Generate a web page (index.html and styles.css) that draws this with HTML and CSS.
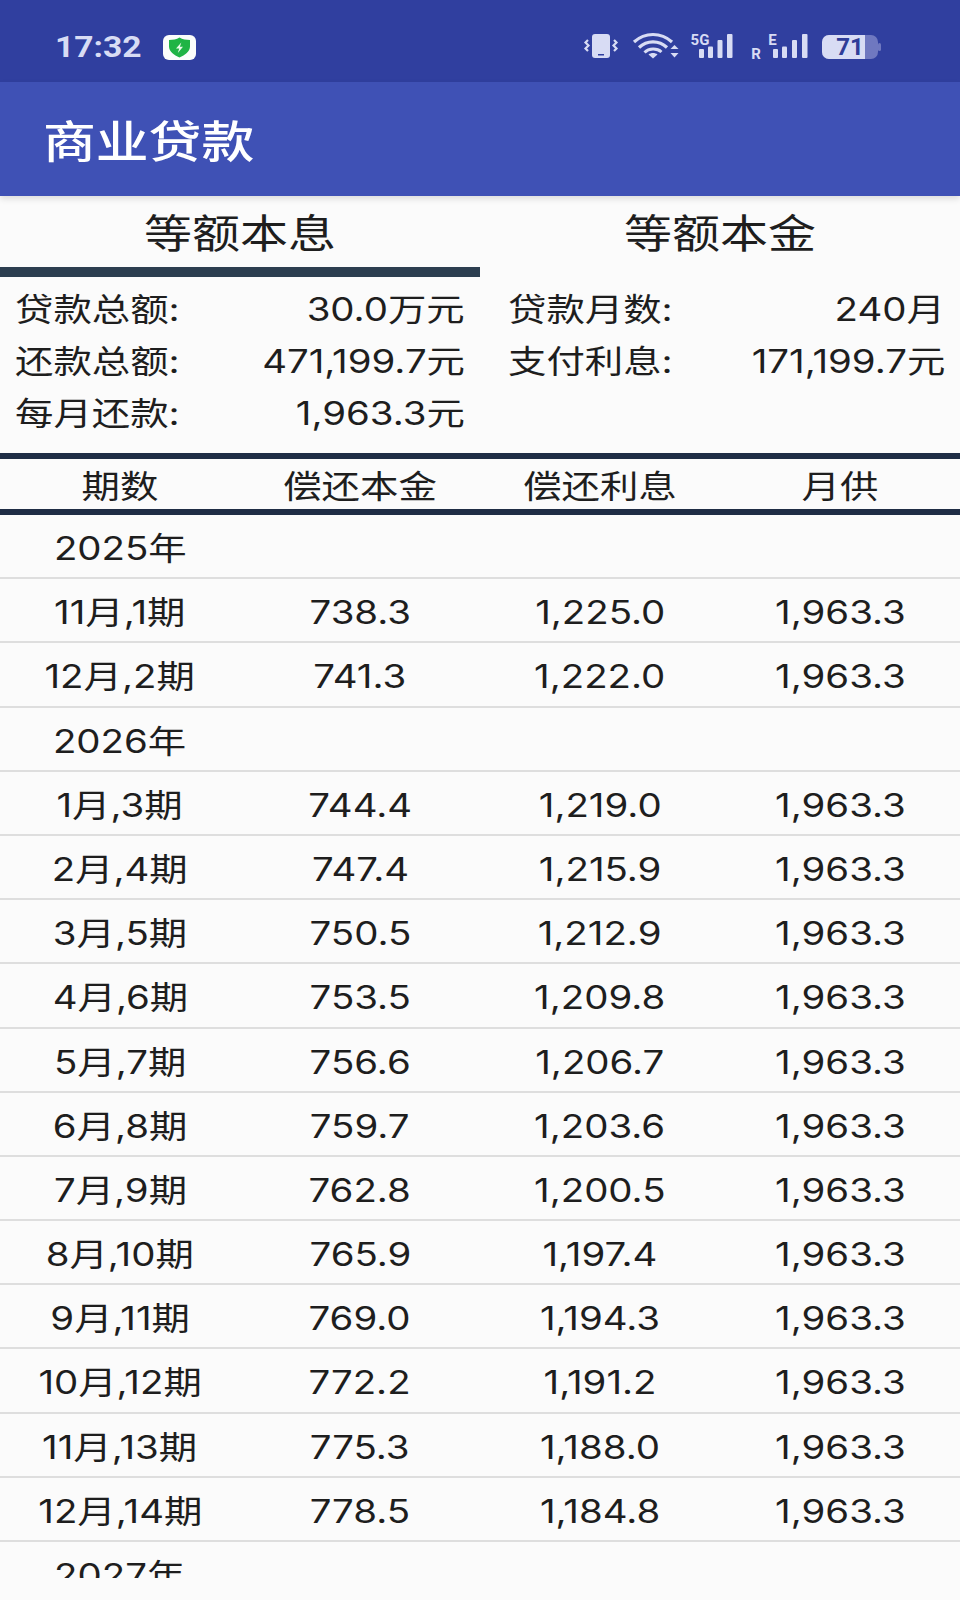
FILE: index.html
```html
<!DOCTYPE html>
<html lang="zh-CN">
<head>
    <meta charset="UTF-8">
    <meta name="viewport" content="width=device-width, initial-scale=1.0">
    <title>商业贷款</title>
    <link rel="stylesheet" href="styles.css">
</head>
<body>
    <div class="status-bar">
        <span class="time">17:32</span>
        <svg class="shield" width="33" height="25" viewBox="0 0 33 25">
            <rect width="33" height="25" rx="6" fill="#fbfdfb"/>
            <path d="M16.500 2.500 C19.500 4.300 23 5 27 5 L27 11.500 C27 16.500 22 20 16.500 22.500 C11 20 6 16.500 6 11.500 L6 5 C10 5 13.500 4.300 16.500 2.500 Z" fill="#1fb445"/>
            <path d="M18.300 7.500 L13 13.500 L16.200 13.500 L14.800 18 L20 11.800 L16.900 11.800 Z" fill="#e9fbe9"/>
        </svg>
        <svg class="status-icons" width="298" height="26" viewBox="0 0 298 26">
            <!-- vibrate -->
            <rect x="8" y="0" width="18" height="24" rx="3" fill="#d8dcf4"/>
            <rect x="14" y="20" width="6" height="1.500" fill="#303f9f"/>
            <path d="M4 6 L1.500 8.500 L4.500 11.500 L1.500 14.500 L4 17" fill="none" stroke="#d8dcf4" stroke-width="2.200"/>
            <path d="M30 6 L32.500 8.500 L29.500 11.500 L32.500 14.500 L30 17" fill="none" stroke="#d8dcf4" stroke-width="2.200"/>
            <!-- wifi -->
            <path d="M50 8 C61 -2 77 -2 88 8" fill="none" stroke="#d8dcf4" stroke-width="3.200"/>
            <path d="M55 13.500 C63 6 75 6 83 13.500" fill="none" stroke="#d8dcf4" stroke-width="3.200"/>
            <path d="M60.500 18.500 C65 14 73 14 77.500 18" fill="none" stroke="#d8dcf4" stroke-width="3"/>
            <path d="M64.500 20.500 C67 18.500 71 18.500 73.500 20.500 L69 24.500 Z" fill="#d8dcf4"/>
            <path d="M86.500 15 L90.500 11 L94.500 15 Z M86.500 19 L94.500 19 L90.500 23.500 Z" fill="#d8dcf4"/>
            <!-- 5G signal -->
            <text class="net" x="116" y="10.500">5G</text>
            <rect x="115" y="15" width="5" height="9" rx="1" fill="#d8dcf4"/>
            <rect x="124" y="12.500" width="5" height="11.500" rx="1" fill="#d8dcf4"/>
            <rect x="133.500" y="6" width="5" height="18" rx="1" fill="#d8dcf4"/>
            <rect x="143" y="0" width="5.500" height="24" rx="1" fill="#d8dcf4"/>
            <!-- roaming signal -->
            <text class="net" x="172" y="24.500">R</text>
            <text class="net" x="188.500" y="10.500">E</text>
            <rect x="189" y="15" width="5" height="9" rx="1" fill="#d8dcf4"/>
            <rect x="198" y="12.500" width="5" height="11.500" rx="1" fill="#d8dcf4"/>
            <rect x="208" y="6" width="5" height="18" rx="1" fill="#d8dcf4"/>
            <rect x="218" y="0" width="5.500" height="24" rx="1" fill="#d8dcf4"/>
            <!-- battery -->
            <rect x="238" y="1" width="56" height="24" rx="7" fill="#6f78c0"/>
            <rect x="294" y="9" width="3" height="8" rx="1.500" fill="#6f78c0"/>
            <path d="M245 1 L281 1 L281 25 L245 25 A7 7 0 0 1 238 18 L238 8 A7 7 0 0 1 245 1 Z" fill="#d8dcf4"/>
            <text class="level" x="266" y="21">71</text>
        </svg>
    </div>

    <div class="app-bar"><span class="wide left">商业贷款</span></div>

    <div class="tabs">
        <div class="tab active"><span class="wide">等额本息</span></div>
        <div class="tab"><span class="wide">等额本金</span></div>
    </div>

    <div class="summary">
        <div class="item"><span class="wide left">贷款总额:</span><span class="wide right">30.0万元</span></div>
        <div class="item"><span class="wide left">贷款月数:</span><span class="wide right">240月</span></div>
        <div class="item"><span class="wide left">还款总额:</span><span class="wide right">471,199.7元</span></div>
        <div class="item"><span class="wide left">支付利息:</span><span class="wide right">171,199.7元</span></div>
        <div class="item"><span class="wide left">每月还款:</span><span class="wide right">1,963.3元</span></div>
    </div>

    <div class="table-head">
        <div><span class="wide">期数</span></div>
        <div><span class="wide">偿还本金</span></div>
        <div><span class="wide">偿还利息</span></div>
        <div><span class="wide">月供</span></div>
    </div>

    <div class="list">
        <div class="row"><div><span class="wide">2025年</span></div></div>
        <div class="row"><div><span class="wide">11月,1期</span></div><div><span class="wide">738.3</span></div><div><span class="wide">1,225.0</span></div><div><span class="wide">1,963.3</span></div></div>
        <div class="row"><div><span class="wide">12月,2期</span></div><div><span class="wide">741.3</span></div><div><span class="wide">1,222.0</span></div><div><span class="wide">1,963.3</span></div></div>
        <div class="row"><div><span class="wide">2026年</span></div></div>
        <div class="row"><div><span class="wide">1月,3期</span></div><div><span class="wide">744.4</span></div><div><span class="wide">1,219.0</span></div><div><span class="wide">1,963.3</span></div></div>
        <div class="row"><div><span class="wide">2月,4期</span></div><div><span class="wide">747.4</span></div><div><span class="wide">1,215.9</span></div><div><span class="wide">1,963.3</span></div></div>
        <div class="row"><div><span class="wide">3月,5期</span></div><div><span class="wide">750.5</span></div><div><span class="wide">1,212.9</span></div><div><span class="wide">1,963.3</span></div></div>
        <div class="row"><div><span class="wide">4月,6期</span></div><div><span class="wide">753.5</span></div><div><span class="wide">1,209.8</span></div><div><span class="wide">1,963.3</span></div></div>
        <div class="row"><div><span class="wide">5月,7期</span></div><div><span class="wide">756.6</span></div><div><span class="wide">1,206.7</span></div><div><span class="wide">1,963.3</span></div></div>
        <div class="row"><div><span class="wide">6月,8期</span></div><div><span class="wide">759.7</span></div><div><span class="wide">1,203.6</span></div><div><span class="wide">1,963.3</span></div></div>
        <div class="row"><div><span class="wide">7月,9期</span></div><div><span class="wide">762.8</span></div><div><span class="wide">1,200.5</span></div><div><span class="wide">1,963.3</span></div></div>
        <div class="row"><div><span class="wide">8月,10期</span></div><div><span class="wide">765.9</span></div><div><span class="wide">1,197.4</span></div><div><span class="wide">1,963.3</span></div></div>
        <div class="row"><div><span class="wide">9月,11期</span></div><div><span class="wide">769.0</span></div><div><span class="wide">1,194.3</span></div><div><span class="wide">1,963.3</span></div></div>
        <div class="row"><div><span class="wide">10月,12期</span></div><div><span class="wide">772.2</span></div><div><span class="wide">1,191.2</span></div><div><span class="wide">1,963.3</span></div></div>
        <div class="row"><div><span class="wide">11月,13期</span></div><div><span class="wide">775.3</span></div><div><span class="wide">1,188.0</span></div><div><span class="wide">1,963.3</span></div></div>
        <div class="row"><div><span class="wide">12月,14期</span></div><div><span class="wide">778.5</span></div><div><span class="wide">1,184.8</span></div><div><span class="wide">1,963.3</span></div></div>
        <div class="row"><div><span class="wide">2027年</span></div></div>
    </div>
</body>
</html>
```

FILE: styles.css
```css
body {
    margin: 0;
    padding: 0;
    width: 960px;
    height: 1600px;
    overflow: hidden;
    background: #fbfbfb;
    color: #1e1e1e;
    font-family: Inter, "Noto Sans CJK SC", sans-serif;
    font-size: 32px;
}
/* the screenshot is stretched sideways, so text is widened to match */
.wide {
    display: inline-block;
    white-space: nowrap;
    transform: scaleX(1.2);
    transform-origin: center;
}
.wide.left {
    transform-origin: left center;
}
.wide.right {
    transform-origin: right center;
}
.status-bar {
    height: 82px;
    background: #303f9f;
    display: flex;
    align-items: center;
    padding-left: 55px;
    padding-top: 12px;
    box-sizing: border-box;
}
.time {
    width: 108px;
    margin-top: -2px;
    color: #d8dcf4;
    font-family: Roboto, sans-serif;
    font-size: 30px;
    font-weight: 700;
    transform: scaleX(1.12);
    transform-origin: left center;
}
.shield {
    display: block;
}
.status-icons {
    display: block;
    margin-left: 388px;
    overflow: visible;
}
.net {
    fill: #d8dcf4;
    font-family: Roboto, sans-serif;
    font-size: 15px;
    font-weight: 700;
    text-anchor: middle;
}
.level {
    fill: #2f3d98;
    font-family: Roboto, sans-serif;
    font-size: 24px;
    font-weight: 700;
    text-anchor: middle;
}
.app-bar {
    height: 114px;
    background: #3f51b5;
    color: #fff;
    font-size: 44px;
    font-weight: 500;
    display: flex;
    align-items: center;
    padding-left: 43px;
    box-sizing: border-box;
    box-shadow: 0 3px 6px rgba(0, 0, 0, 0.12);
}
.tabs {
    display: grid;
    grid-template-columns: 1fr 1fr;
}
.tab {
    height: 81px;
    box-sizing: border-box;
    padding-bottom: 2px;
    border-bottom: 10px solid transparent;
    display: flex;
    justify-content: center;
    align-items: center;
    font-size: 40px;
}
.tab.active {
    border-bottom-color: #2c3e50;
}
.summary {
    display: grid;
    grid-template-columns: 480px 480px;
    grid-auto-rows: 52px;
    height: 176px;
    padding-top: 4px;
    box-sizing: border-box;
}
.item {
    display: flex;
    justify-content: space-between;
    align-items: center;
    padding: 0 15px;
}
.item:nth-child(even) {
    padding-left: 28px;
}
.table-head {
    display: grid;
    grid-template-columns: repeat(4, 1fr);
    height: 62px;
    box-sizing: border-box;
    border-top: 6px solid #1f2d45;
    border-bottom: 6px solid #1f2d45;
    text-align: center;
    line-height: 55px;
}
.list {
    height: 1063px;
    overflow: hidden;
}
.row {
    display: grid;
    grid-template-columns: repeat(4, 1fr);
    height: 64.2px;
    box-sizing: border-box;
    padding-top: 1px;
    border-bottom: 2px solid #dedede;
    text-align: center;
    line-height: 65px;
}
```
